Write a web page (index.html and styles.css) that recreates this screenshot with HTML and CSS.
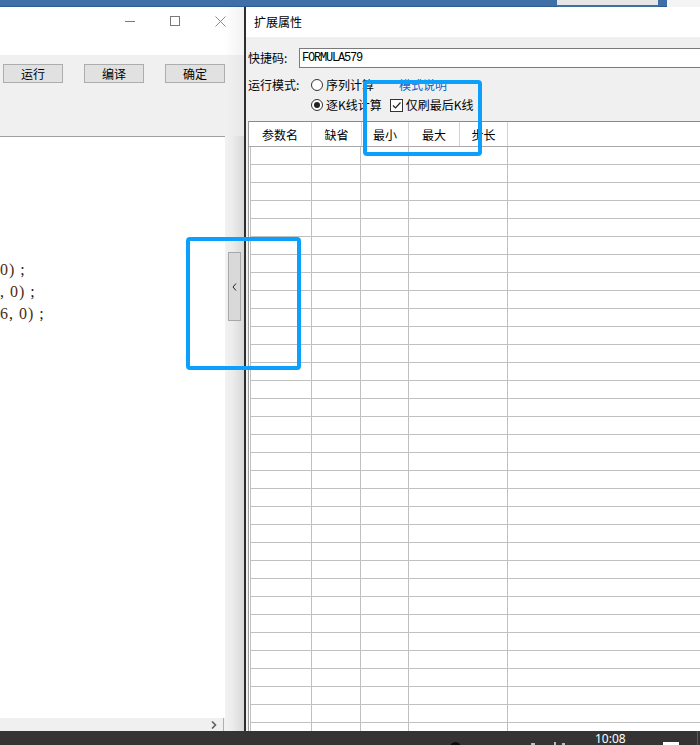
FILE: index.html
```html
<!DOCTYPE html>
<html lang="zh">
<head>
<meta charset="utf-8">
<link rel="stylesheet" href="styles.css">
</head>
<body>
<div class="topbar">
  <span class="tb-blue tb-a"></span>
  <span class="tb-light"></span>
  <span class="tb-blue tb-b"></span>
  <span class="tb-white"></span>
</div>
<div class="desk">
  <div class="leftwin">
    <div class="lw-title">
      <span class="ctl ctl-min"></span>
      <span class="ctl ctl-max"></span>
      <svg class="ctl ctl-close" width="11" height="11" viewBox="0 0 11 11"><path d="M0.5 0.5 L10.5 10.5 M10.5 0.5 L0.5 10.5" stroke="#8a8a8a" stroke-width="1" fill="none"/></svg>
    </div>
    <div class="lw-tools">
      <button class="btn">运行</button>
      <button class="btn">编译</button>
      <button class="btn">确定</button>
    </div>
    <div class="lw-body">
      <div class="editor-col">
        <div class="editor">
          <div class="code-line"><span class="num">0)</span> ;</div>
          <div class="code-line">, <span class="num">0)</span> ;</div>
          <div class="code-line"><span class="num">6</span>, <span class="num">0)</span> ;</div>
        </div>
        <div class="hscroll">
          <svg class="arrow-r" width="6" height="8" viewBox="0 0 6 8"><path d="M1 0.5 L4.5 4 L1 7.5" stroke="#606060" stroke-width="1.6" fill="none"/></svg>
        </div>
      </div>
      <div class="strip">
        <div class="handle">
          <svg width="5" height="8" viewBox="0 0 5 8"><path d="M4 0.5 L1 4 L4 7.5" stroke="#222" stroke-width="1" fill="none"/></svg>
        </div>
      </div>
    </div>
  </div>
  <div class="rightwin">
    <div class="rw-title">扩展属性</div>
    <div class="rw-body">
      <div class="f-row">
        <span class="f-label">快捷码:</span>
        <div class="f-input">FORMULA579</div>
      </div>
      <div class="m-row">
        <span class="m-label">运行模式:</span>
        <span class="radio"></span>
        <span class="opt-text">序列计算</span>
        <span class="link">模式说明</span>
      </div>
      <div class="m-row m-row2">
        <span class="radio checked"></span>
        <span class="opt-text">逐K线计算</span>
        <span class="check">
          <svg width="11" height="11" viewBox="0 0 11 11"><path d="M2 5.5 L4.5 8 L9.5 2.5" stroke="#222" stroke-width="1.2" fill="none"/></svg>
        </span>
        <span class="opt-text">仅刷最后K线</span>
      </div>
      <div class="grid">
        <div class="g-head">
          <span class="h h1">参数名</span>
          <span class="h h2">缺省</span>
          <span class="h h3">最小</span>
          <span class="h h4">最大</span>
          <span class="h h5">步长</span>
          <span class="h h6"></span>
        </div>
        <div class="g-body">
          <div class="g-row"><span class="c c1"></span><span class="c c2"></span><span class="c c3"></span><span class="c c4"></span><span class="c c5"></span></div>
          <div class="g-row"><span class="c c1"></span><span class="c c2"></span><span class="c c3"></span><span class="c c4"></span><span class="c c5"></span></div>
          <div class="g-row"><span class="c c1"></span><span class="c c2"></span><span class="c c3"></span><span class="c c4"></span><span class="c c5"></span></div>
          <div class="g-row"><span class="c c1"></span><span class="c c2"></span><span class="c c3"></span><span class="c c4"></span><span class="c c5"></span></div>
          <div class="g-row"><span class="c c1"></span><span class="c c2"></span><span class="c c3"></span><span class="c c4"></span><span class="c c5"></span></div>
          <div class="g-row"><span class="c c1"></span><span class="c c2"></span><span class="c c3"></span><span class="c c4"></span><span class="c c5"></span></div>
          <div class="g-row"><span class="c c1"></span><span class="c c2"></span><span class="c c3"></span><span class="c c4"></span><span class="c c5"></span></div>
          <div class="g-row"><span class="c c1"></span><span class="c c2"></span><span class="c c3"></span><span class="c c4"></span><span class="c c5"></span></div>
          <div class="g-row"><span class="c c1"></span><span class="c c2"></span><span class="c c3"></span><span class="c c4"></span><span class="c c5"></span></div>
          <div class="g-row"><span class="c c1"></span><span class="c c2"></span><span class="c c3"></span><span class="c c4"></span><span class="c c5"></span></div>
          <div class="g-row"><span class="c c1"></span><span class="c c2"></span><span class="c c3"></span><span class="c c4"></span><span class="c c5"></span></div>
          <div class="g-row"><span class="c c1"></span><span class="c c2"></span><span class="c c3"></span><span class="c c4"></span><span class="c c5"></span></div>
          <div class="g-row"><span class="c c1"></span><span class="c c2"></span><span class="c c3"></span><span class="c c4"></span><span class="c c5"></span></div>
          <div class="g-row"><span class="c c1"></span><span class="c c2"></span><span class="c c3"></span><span class="c c4"></span><span class="c c5"></span></div>
          <div class="g-row"><span class="c c1"></span><span class="c c2"></span><span class="c c3"></span><span class="c c4"></span><span class="c c5"></span></div>
          <div class="g-row"><span class="c c1"></span><span class="c c2"></span><span class="c c3"></span><span class="c c4"></span><span class="c c5"></span></div>
          <div class="g-row"><span class="c c1"></span><span class="c c2"></span><span class="c c3"></span><span class="c c4"></span><span class="c c5"></span></div>
          <div class="g-row"><span class="c c1"></span><span class="c c2"></span><span class="c c3"></span><span class="c c4"></span><span class="c c5"></span></div>
          <div class="g-row"><span class="c c1"></span><span class="c c2"></span><span class="c c3"></span><span class="c c4"></span><span class="c c5"></span></div>
          <div class="g-row"><span class="c c1"></span><span class="c c2"></span><span class="c c3"></span><span class="c c4"></span><span class="c c5"></span></div>
          <div class="g-row"><span class="c c1"></span><span class="c c2"></span><span class="c c3"></span><span class="c c4"></span><span class="c c5"></span></div>
          <div class="g-row"><span class="c c1"></span><span class="c c2"></span><span class="c c3"></span><span class="c c4"></span><span class="c c5"></span></div>
          <div class="g-row"><span class="c c1"></span><span class="c c2"></span><span class="c c3"></span><span class="c c4"></span><span class="c c5"></span></div>
          <div class="g-row"><span class="c c1"></span><span class="c c2"></span><span class="c c3"></span><span class="c c4"></span><span class="c c5"></span></div>
          <div class="g-row"><span class="c c1"></span><span class="c c2"></span><span class="c c3"></span><span class="c c4"></span><span class="c c5"></span></div>
          <div class="g-row"><span class="c c1"></span><span class="c c2"></span><span class="c c3"></span><span class="c c4"></span><span class="c c5"></span></div>
          <div class="g-row"><span class="c c1"></span><span class="c c2"></span><span class="c c3"></span><span class="c c4"></span><span class="c c5"></span></div>
          <div class="g-row"><span class="c c1"></span><span class="c c2"></span><span class="c c3"></span><span class="c c4"></span><span class="c c5"></span></div>
          <div class="g-row"><span class="c c1"></span><span class="c c2"></span><span class="c c3"></span><span class="c c4"></span><span class="c c5"></span></div>
          <div class="g-row"><span class="c c1"></span><span class="c c2"></span><span class="c c3"></span><span class="c c4"></span><span class="c c5"></span></div>
          <div class="g-row"><span class="c c1"></span><span class="c c2"></span><span class="c c3"></span><span class="c c4"></span><span class="c c5"></span></div>
          <div class="g-row"><span class="c c1"></span><span class="c c2"></span><span class="c c3"></span><span class="c c4"></span><span class="c c5"></span></div>
          <div class="g-row"><span class="c c1"></span><span class="c c2"></span><span class="c c3"></span><span class="c c4"></span><span class="c c5"></span></div>
        </div>
      </div>
    </div>
  </div>
</div>
<div class="taskbar">
  <span class="tk-dot"></span>
  <span class="tk-mini tk-m1"></span>
  <span class="tk-mini tk-m2"></span>
  <span class="tk-mini tk-m3"></span>
  <span class="tk-time">10:08</span>
  <span class="tk-rect"></span>
  <span class="tk-line"></span>
</div>
<div class="hl hl1"></div>
<div class="hl hl2"></div>
</body>
</html>
```

FILE: styles.css
```css
html, body {
  margin: 0;
  padding: 0;
}
body {
  width: 700px;
  height: 745px;
  overflow: hidden;
  position: relative;
  background: #f0f0f0;
  font-family: "Noto Sans CJK SC", "Noto Sans", sans-serif;
  font-size: 12px;
  line-height: 14px;
  color: #000;
}

/* top strip of a window behind */
.topbar {
  height: 7px;
  display: flex;
}
.tb-blue {
  background: #3f6fa7;
  border-bottom: 1px solid #2f5b8e;
  box-sizing: border-box;
}
.tb-a { width: 557px; }
.tb-light {
  width: 101px;
  background: linear-gradient(#e6e6e6 0, #e6e6e6 5px, #3f6fa7 5px);
}
.tb-b { width: 9px; }
.tb-white { flex: 1; background: #f4f4f4; }

.desk {
  height: 724px;
  display: flex;
  overflow: hidden;
}

/* ---------- left window ---------- */
.leftwin {
  flex: 0 0 244px;
  display: flex;
  flex-direction: column;
  background: #f0f0f0;
}
.lw-title {
  height: 48px;
  background: linear-gradient(90deg, #fff 0, #fff 224px, #f2f2f2 244px);
  display: flex;
  align-items: flex-start;
  justify-content: flex-end;
  padding: 9px 18px 0 0;
  box-sizing: border-box;
}
.ctl {
  display: block;
  width: 10px;
  height: 10px;
  box-sizing: border-box;
}
.ctl-min {
  border-bottom: 1px solid #7a7a7a;
  height: 6px;
  margin-right: 35px;
}
.ctl-max {
  border: 1px solid #7a7a7a;
  margin-right: 35px;
}
.ctl-close { width: 11px; height: 11px; }

.lw-tools {
  height: 81px;
  display: flex;
  align-items: flex-start;
  gap: 21px;
  padding: 9px 0 0 3px;
  box-sizing: border-box;
  background: linear-gradient(90deg, #f0f0f0 0, #f0f0f0 226px, #e8e8e8 244px);
}
.btn {
  width: 60px;
  height: 19px;
  margin: 0;
  padding: 0;
  background: #e1e1e1;
  border: 1px solid #adadad;
  font-family: "Noto Sans CJK SC", sans-serif;
  font-size: 12px;
  line-height: 16px;
  color: #000;
}

.lw-body {
  flex: 1;
  display: flex;
  min-height: 0;
}
.editor-col {
  width: 225px;
  display: flex;
  flex-direction: column;
  border-top: 1px solid #a0a0a0;
}
.editor {
  flex: 1;
  background: #fff;
  padding-top: 122px;
  overflow: hidden;
  font-family: "Liberation Serif", "Times New Roman", serif;
  font-size: 16px;
  line-height: 22px;
  letter-spacing: 1px;
  color: #2a1a08;
}
.code-line {
  height: 22px;
  white-space: pre;
}
.code-line .num { color: #4a2e10; }
.hscroll {
  height: 13px;
  display: flex;
  justify-content: flex-end;
  align-items: center;
  background: #f0f0f0;
}
.arrow-r {
  display: block;
  margin-right: 6px;
}
.hscroll::after {
  content: "";
  width: 1px;
  height: 13px;
  background: #b0b0b0;
  margin-right: 1px;
}
.strip {
  flex: 1;
  background: linear-gradient(90deg, #f2f2f2 0, #ececec 40%, #d8d8d8 100%);
  padding: 116px 0 0 3px;
  box-sizing: border-box;
}
.handle {
  width: 13px;
  height: 69px;
  box-sizing: border-box;
  background: #d9d9d9;
  border: 1px solid #a8a8a8;
  display: flex;
  align-items: center;
  justify-content: center;
}
.handle svg { display: block; margin-left: -1px; }

/* ---------- right window ---------- */
.rightwin {
  flex: 0 0 480px;
  display: flex;
  flex-direction: column;
  border-left: 2px solid #2e2e2e;
  background: #f0f0f0;
}
.rw-title {
  height: 30px;
  background: #fff;
  padding-left: 8px;
  line-height: 30px;
  font-size: 12px;
  color: #000;
}
.rw-body {
  flex: 1;
  min-height: 0;
  display: flex;
  flex-direction: column;
  padding-left: 2px;
}
.f-row {
  margin-top: 11px;
  height: 20px;
  display: flex;
  align-items: center;
}
.f-label { width: 51px; }
.f-input {
  flex: 1;
  height: 20px;
  box-sizing: border-box;
  background: #fff;
  border: 1px solid #7a7a7a;
  padding-left: 2px;
  font-family: "Liberation Mono", "DejaVu Sans Mono", monospace;
  font-size: 12px;
  letter-spacing: -1.2px;
  line-height: 18px;
}
.m-row {
  height: 20px;
  display: flex;
  align-items: center;
}
.f-row + .m-row { margin-top: 7px; }
.m-label { width: 63px; }
.m-row2 { padding-left: 63px; }
.radio {
  width: 12px;
  height: 12px;
  box-sizing: border-box;
  border: 1px solid #333;
  border-radius: 50%;
  background: #fff;
  margin-right: 3px;
  display: flex;
  align-items: center;
  justify-content: center;
}
.radio.checked::after {
  content: "";
  width: 6px;
  height: 6px;
  border-radius: 50%;
  background: #222;
}
.opt-text { white-space: nowrap; }
.link {
  color: #0a5fc8;
  margin-left: 25px;
}
.check {
  width: 13px;
  height: 13px;
  box-sizing: border-box;
  border: 1px solid #333;
  background: #fff;
  margin-left: 8px;
  margin-right: 3px;
  display: flex;
  align-items: center;
  justify-content: center;
}
.check svg { display: block; }

.grid {
  margin-top: 6px;
  flex: 1;
  min-height: 0;
  overflow: hidden;
  border-top: 1px solid #8a8a8a;
  border-left: 1px solid #9a9a9a;
  background: #fff;
}
.g-head {
  height: 25px;
  display: flex;
  border-bottom: 1px solid #a8a8a8;
  box-sizing: border-box;
  background: #fff;
}
.h {
  display: flex;
  align-items: center;
  justify-content: center;
  border-right: 1px solid #d4d4d4;
  box-sizing: border-box;
  padding-top: 1px;
}
.h1 { width: 63px; }
.h2 { width: 50px; }
.h3 { width: 47px; }
.h4 { width: 51px; }
.h5 { width: 48px; }
.h6 { flex: 1; border-right: none; }

.g-body {
  margin-left: 1px;
  border-left: 1px solid #c0c0c0;
}
.g-row {
  height: 18px;
  display: flex;
  border-bottom: 1px solid #c0c0c0;
  box-sizing: border-box;
}
.c {
  border-right: 1px solid #c0c0c0;
  box-sizing: border-box;
}
.c1 { width: 61px; }
.c2 { width: 49px; }
.c3 { width: 48px; }
.c4 { width: 99px; }
.c5 { flex: 1; border-right: none; }

/* ---------- taskbar ---------- */
.taskbar {
  height: 14px;
  background: #343434;
  display: flex;
  align-items: flex-start;
  overflow: hidden;
}
.tk-dot {
  width: 11px;
  height: 11px;
  border-radius: 50%;
  background: #0c0c0c;
  margin: 11px 0 0 450px;
}
.tk-mini {
  width: 3px;
  height: 3px;
  background: #bdbdbd;
  margin-top: 12px;
}
.tk-m1 { margin-left: 70px; width: 4px; }
.tk-m2 { margin-left: 19px; width: 2px; height: 4px; margin-top: 11px; }
.tk-m3 { margin-left: 6px; }
.tk-time {
  margin-left: 30px;
  margin-top: 1px;
  color: #fff;
  font-family: "Noto Sans", "Liberation Sans", sans-serif;
  font-size: 12px;
  line-height: 14px;
}
.tk-rect {
  width: 16px;
  height: 3px;
  background: #fff;
  margin: 11px 0 0 37px;
}
.tk-line {
  width: 1px;
  height: 14px;
  background: #5a5a5a;
  margin-left: 18px;
}

/* ---------- highlight overlays ---------- */
.hl {
  position: absolute;
  border: 4px solid #0aa0fb;
  border-radius: 4px;
  box-sizing: border-box;
}
.hl1 { left: 363px; top: 80px; width: 119px; height: 76px; }
.hl2 { left: 186px; top: 237px; width: 115px; height: 133px; }
```
